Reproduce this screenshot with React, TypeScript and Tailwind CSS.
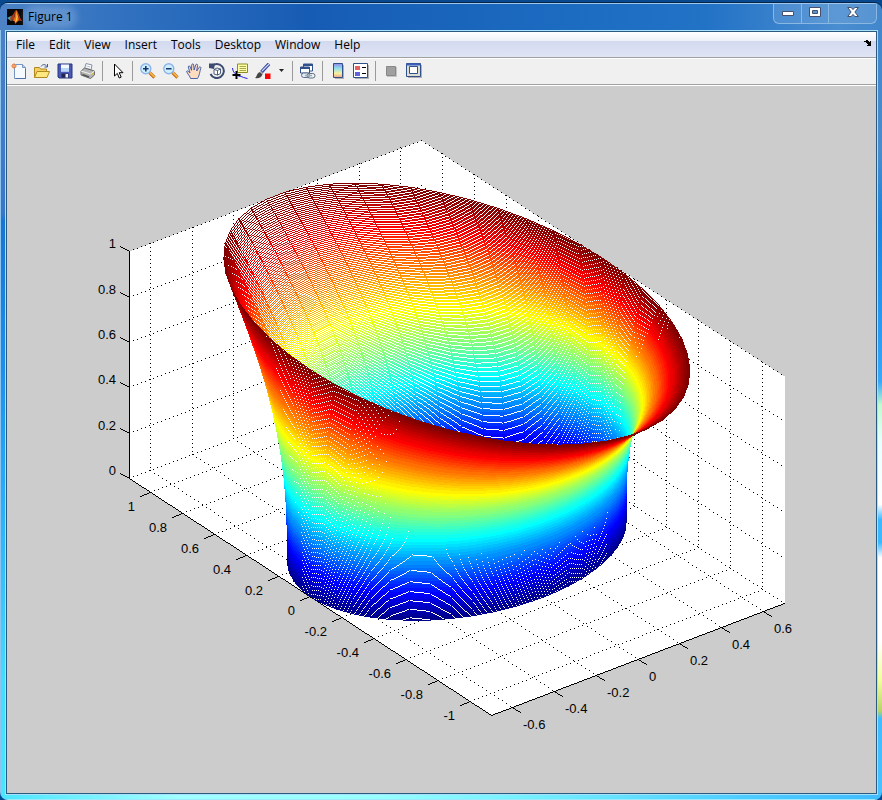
import type { ReactNode } from "react";

/* ---------- plot geometry ---------- */

const LEFT = 7;
const TOP = 86;
const W = 869;
const H = 707;

const WHITE = 1;
const BLACK = 2;
const JET = 3;

const X_MAX = 0.7;
const Y_MAX = 1.1325;

type Point = [number, number];

// az = -37.5, el = 30, equal axes
const projectExact = (x: number, y: number, z: number): Point => [
  456.3 + 208.6 * x - 160 * y,
  540.6 - 79.8 * x - 104.4 * y - 227 * z,
];

const project = (x: number, y: number, z: number): Point => {
  const [px, py] = projectExact(x, y, z);
  return [Math.round(px), Math.round(py)];
};

const pixels = new Uint8Array(W * H);

const plot = (x: number, y: number, color: number) => {
  const px = x - LEFT;
  const py = y - TOP;
  if (px >= 0 && py >= 0 && px < W && py < H) pixels[py * W + px] = color;
};

// steps along the longer axis, one pixel per step
const line = (a: Point, b: Point, color: number, every = 1) => {
  const major = Math.abs(b[0] - a[0]) >= Math.abs(b[1] - a[1]) ? 0 : 1;
  const minor = 1 - major;
  const start = Math.round(a[major]);
  const end = Math.round(b[major]);
  const dir = start <= end ? 1 : -1;
  const span = b[major] - a[major];
  const slope = span === 0 ? 0 : (b[minor] - a[minor]) / span;
  for (let n = 0; n <= Math.abs(end - start); n++) {
    if (n % every !== 0) continue;
    const m = start + n * dir;
    const v = Math.round(a[minor] + (m - a[major]) * slope);
    if (major === 0) plot(m, v, color);
    else plot(v, m, color);
  }
};

const fill = (points: Point[], color: number) => {
  const ys = points.map((p) => p[1]);
  for (let y = Math.ceil(Math.min(...ys)); y <= Math.max(...ys); y++) {
    const xs: number[] = [];
    points.forEach((p, i) => {
      const q = points[(i + 1) % points.length];
      if (p[1] <= y !== q[1] <= y) {
        xs.push(p[0] + ((y - p[1]) * (q[0] - p[0])) / (q[1] - p[1]));
      }
    });
    xs.sort((a, b) => a - b);
    for (let i = 0; i + 1 < xs.length; i += 2) {
      for (let x = Math.ceil(xs[i]); x <= Math.floor(xs[i + 1]); x++) plot(x, y, color);
    }
  }
};

const X_TICKS = [-0.6, -0.4, -0.2, 0, 0.2, 0.4, 0.6];
const Y_TICKS = [1, 0.8, 0.6, 0.4, 0.2, 0, -0.2, -0.4, -0.6, -0.8, -1];
const Z_TICKS = [0, 0.2, 0.4, 0.6, 0.8, 1];

const drawAxes = () => {
  fill(
    [
      project(-X_MAX, Y_MAX, 0),
      project(-X_MAX, Y_MAX, 1),
      project(X_MAX, Y_MAX, 1),
      project(X_MAX, -Y_MAX, 1),
      project(X_MAX, -Y_MAX, 0),
      project(-X_MAX, -Y_MAX, 0),
    ],
    WHITE
  );

  X_TICKS.forEach((x) => {
    line(project(x, Y_MAX, 1), project(x, Y_MAX, 0), BLACK, 4);
    line(project(x, Y_MAX, 0), project(x, -Y_MAX, 0), BLACK, 4);
  });
  Y_TICKS.forEach((y) => {
    line(project(X_MAX, y, 1), project(X_MAX, y, 0), BLACK, 4);
    line(project(-X_MAX, y, 0), project(X_MAX, y, 0), BLACK, 4);
  });
  Z_TICKS.forEach((z) => {
    line(project(-X_MAX, Y_MAX, z), project(X_MAX, Y_MAX, z), BLACK, 4);
    line(project(X_MAX, Y_MAX, z), project(X_MAX, -Y_MAX, z), BLACK, 4);
  });

  line(project(-X_MAX, Y_MAX, 1), project(-X_MAX, Y_MAX, 0), BLACK);
  line(project(-X_MAX, Y_MAX, 0), project(-X_MAX, -Y_MAX, 0), BLACK);
  line(project(-X_MAX, -Y_MAX, 0), project(X_MAX, -Y_MAX, 0), BLACK);

  X_TICKS.forEach((x) => {
    const p = project(x, -Y_MAX, 0);
    line(p, [p[0] + 8, p[1] + 5], BLACK);
  });
  Y_TICKS.forEach((y) => {
    const p = project(-X_MAX, y, 0);
    line(p, [p[0] - 10, p[1] + 4], BLACK);
  });
  Z_TICKS.forEach((z) => {
    const p = project(-X_MAX, Y_MAX, z);
    line(p, [p[0] - 9, p[1] - 5], BLACK);
  });
};

const ROWS = 200;
const COLS = 50;

// elliptic tube whose y radius grows with height
const surface = (i: number, j: number) => {
  const z = i / ROWS;
  const t = (2 * Math.PI * j) / COLS;
  const x = X_MAX * Math.cos(t);
  const y = Math.sqrt(0.29 + 0.998 * z ** 3) * Math.sin(t);
  return { at: projectExact(x, y, z), depth: -0.527 * x - 0.687 * y + 0.5 * z };
};

const drawMesh = () => {
  const faces: { points: Point[]; depth: number; color: number }[] = [];
  for (let i = 0; i < ROWS; i++) {
    for (let j = 0; j < COLS; j++) {
      const corners = [surface(i, j), surface(i, j + 1), surface(i + 1, j + 1), surface(i + 1, j)];
      faces.push({
        points: corners.map((c) => c.at),
        depth: corners.reduce((sum, c) => sum + c.depth, 0),
        color: JET + Math.min(63, Math.floor((i / ROWS) * 64)),
      });
    }
  }
  faces.sort((a, b) => a.depth - b.depth);
  faces.forEach(({ points, color }) => {
    fill(points, WHITE);
    points.forEach((p, k) => line(p, points[(k + 1) % 4], color));
  });
};

const clamp = (v: number) => Math.round(255 * Math.max(0, Math.min(1, v)));

const colorOf = (index: number) => {
  if (index === WHITE) return "#ffffff";
  if (index === BLACK) return "#000000";
  const v = (index - JET + 1) / 64;
  const r = clamp(1.5 - Math.abs(4 * v - 3));
  const g = clamp(1.5 - Math.abs(4 * v - 2));
  const b = clamp(1.5 - Math.abs(4 * v - 1));
  return `rgb(${r},${g},${b})`;
};

// one path per colour, made of horizontal runs
const buildRuns = () => {
  drawAxes();
  drawMesh();
  const runs = new Map<number, string[]>();
  for (let y = 0; y < H; y++) {
    let x = 0;
    while (x < W) {
      const color = pixels[y * W + x];
      const start = x;
      while (x < W && pixels[y * W + x] === color) x++;
      if (color) {
        if (!runs.has(color)) runs.set(color, []);
        runs.get(color)!.push(`M${start + LEFT} ${y + TOP}h${x - start}v1h${start - x}z`);
      }
    }
  }
  return [...runs].map(([color, parts]) => ({ color: colorOf(color), d: parts.join("") }));
};

const RUNS = buildRuns();

const Figure = () => (
  <svg
    viewBox={`${LEFT} ${TOP} ${W} ${H}`}
    className="block h-full w-full font-['Liberation_Sans',Arial,sans-serif] text-[13px]"
    role="img"
    aria-label="Mesh plot"
  >
    <g shapeRendering="crispEdges">
      {RUNS.map((run) => (
        <path key={run.color} d={run.d} fill={run.color} />
      ))}
    </g>
    {Z_TICKS.map((z) => {
      const [x, y] = project(-X_MAX, Y_MAX, z);
      return (
        <text key={z} x={x - 13} y={y - 3} textAnchor="end">
          {z}
        </text>
      );
    })}
    {Y_TICKS.map((v) => {
      const [x, y] = project(-X_MAX, v, 0);
      return (
        <text key={v} x={x - 15} y={y + 19} textAnchor="end">
          {v}
        </text>
      );
    })}
    {X_TICKS.map((v) => {
      const [x, y] = project(v, -Y_MAX, 0);
      return (
        <text key={v} x={x + 11} y={y + 22}>
          {v}
        </text>
      );
    })}
  </svg>
);

/* ---------- window chrome ---------- */

const MENUS = ["File", "Edit", "View", "Insert", "Tools", "Desktop", "Window", "Help"];

const Icon = ({ children }: { children: ReactNode }) => (
  <svg viewBox="0 0 16 16" className="h-4 w-4" aria-hidden="true">
    {children}
  </svg>
);

const Tool = ({ label, children }: { label: string; children: ReactNode }) => (
  <button type="button" aria-label={label} className="flex h-[23px] w-[23px] items-center justify-center">
    <Icon>{children}</Icon>
  </button>
);

const Separator = () => <div className="mx-[3px] h-5 w-px bg-[#9a9a9a]" />;

const Magnifier = ({ plus }: { plus?: boolean }) => (
  <>
    <path d="M9.5 9.5l5 5" stroke="#b86a10" strokeWidth="3.2" />
    <path d="M9.5 9l5 5" stroke="#f7b04a" strokeWidth="1.8" />
    <circle cx="5.8" cy="5.8" r="5" fill="#cdefff" stroke="#8db4e8" strokeWidth="1.4" />
    <path d={plus ? "M3 5.8h5.6M5.8 3v5.6" : "M3 5.8h5.6"} stroke="#17386e" strokeWidth="1.6" />
  </>
);

const Logo = () => (
  <svg viewBox="0 0 16 16" className="h-4 w-4" aria-hidden="true">
    <rect width="16" height="16" fill="#080808" />
    <path d="M0 9l4-2 3 2-3 3z" fill="#3fa6b5" />
    <path d="M4 7c2 0 3-4 5-6l-2 8-3 3-1-2z" fill="#a63a1c" />
    <path d="M9 1c2 1 3 7 6 11-2-1-3-1-4 0l-3 3c0-3-1-4-3-3 3-2 3-8 4-11z" fill="#e8641c" />
    <path d="M9 3c1 3 0 7-1 10l2-1c1-3 1-6-1-9z" fill="#f9c23c" />
    <path d="M10 3c2 4 3 7 5 9l-3-1z" fill="#9c2412" />
  </svg>
);

const Toolbar = () => (
  <div className="flex h-[26px] items-center border-t border-white bg-[#f0f0f0] pb-[2px]">
    <Tool label="New Figure">
      <path d="M3.5 1.5h8l3 3v11h-11z" fill="#f4faff" stroke="#7795c2" />
      <path d="M11.5 1.5v3h3" fill="#b9d2f0" stroke="#7795c2" />
      <path d="M4.5 15.5h10V6" stroke="#4f70a8" fill="none" />
      <path d="M3 0v6M0 3h6M1 1l4 4M5 1L1 5" stroke="#ee8a50" strokeWidth=".9" />
      <circle cx="3" cy="3" r="1.3" fill="#fff0a0" stroke="#e05820" strokeWidth=".8" />
    </Tool>
    <Tool label="Open File">
      <path d="M.5 14.5v-10h5l1 1.500h6v3" fill="#f5d060" stroke="#b08a20" />
      <path d="M.5 14.500l2.500-6h12.500l-2.500 6z" fill="#ffe780" stroke="#b08a20" />
      <path d="M7 3.500c1.500-2.500 4.500-2.500 6 0M13.500 1v3h-3" fill="none" stroke="#405c90" />
    </Tool>
    <Tool label="Save Figure">
      <path d="M1 1h14v14H2l-1-1z" fill="#4a58b8" stroke="#28347c" />
      <path d="M4 1.500h8v7H4z" fill="#f4f8ff" />
      <path d="M4 5h8v3.500H4z" fill="#b9d8f8" />
      <path d="M4.500 10.500h7v4h-7z" fill="#20264c" />
      <path d="M8.500 11h2.500v3.500H8.500z" fill="#f0f0f0" />
    </Tool>
    <Tool label="Print Figure">
      <path d="M4.500 6l1.500-5.500 6 1.500-1 5z" fill="#fff" stroke="#8590a4" />
      <path d="M6.500 3l4 1M6 5l4 1" stroke="#9cb0d0" strokeWidth=".8" />
      <path d="M1 8l3.500-3 10 3v4l-4 3.500L1 12z" fill="#b4b4b4" stroke="#6a6a6a" />
      <path d="M1 8l9.500 3 4-3" fill="none" stroke="#f2f2f2" />
      <path d="M2.500 11.500l6.500 2.500" stroke="#555" strokeWidth="1.400" />
      <path d="M11.500 11.500l2-1.500" stroke="#e0bc40" strokeWidth="1.300" />
    </Tool>
    <Separator />
    <Tool label="Edit Plot">
      <path d="M4.500 1v12l2.800-2.600L9.200 15l2-.9-2-4.400H13z" fill="#fff" stroke="#000" />
    </Tool>
    <Separator />
    <Tool label="Zoom In">
      <Magnifier plus />
    </Tool>
    <Tool label="Zoom Out">
      <Magnifier />
    </Tool>
    <Tool label="Pan">
      <path
        d="M4.500 15.500c-.5-2-1.500-3-2.500-4.500L.5 8.500c.5-1 1.800-.8 2.800.8L4 10 2.300 4c0-1.400 1.500-1.500 2 0l1.200 3.300L5.700 2c.2-1.500 1.800-1.500 2 0l.4 5L9.700 2c.5-1.400 2-1 1.900.4L10.700 8l2.400-3.700c.9-1 2.200-.2 1.700 1-1 2.700-1.300 7.400-3.300 10.200z"
        fill="#ffdcc0"
        stroke="#3a55a0"
        strokeWidth=".9"
      />
    </Tool>
    <Tool label="Rotate 3D">
      <path d="M2.500 3.500a7 7 0 1 1-1 7.500" fill="none" stroke="#3c4c70" strokeWidth="2" />
      <path d="M0 .5h6L5 6 0 5z" fill="#3c4c70" />
      <path d="M5 6.500l3-1.500 3.500 1v4.500L8.500 12 5 11zM5 6.500l3.500 1 3-1.500M8.500 7.500V12" fill="#fff" stroke="#3c4c70" strokeWidth=".9" />
    </Tool>
    <Tool label="Data Cursor">
      <path d="M5.500 1h10v8.500h-10z" fill="#ffffa8" stroke="#8c8c20" />
      <path d="M7.500 3.500H14M7.500 5.500H14M7.500 7.500H14" stroke="#a8a850" />
      <path d="M.5 5c.3 3 1.500 5 4 7 3 2 5 1 7 2.500l4 1" fill="none" stroke="#2020e0" />
      <path d="M4.500 8v8M.5 12h8" stroke="#000" strokeWidth="2" />
    </Tool>
    <Tool label="Brush">
      <path d="M6.500 9L14 .8" stroke="#38489c" strokeWidth="3.400" />
      <path d="M7 8L14 1" stroke="#c8d2ff" strokeWidth="1.300" />
      <path d="M0 15c2-1 1.500-5 5-6l2.500 2C7 14.500 3 16 0 15z" fill="#454545" />
      <path d="M5.300 8.500l2.500 2.500" stroke="#a8a8a8" strokeWidth="1.400" />
      <path d="M10 10.500h5.500V16H10z" fill="#f00" />
    </Tool>
    <button type="button" aria-label="Brush options" className="flex h-[23px] w-[15px] items-center justify-center">
      <svg viewBox="0 0 5 3" className="h-[3px] w-[5px]" aria-hidden="true">
        <path d="M0 0h5L2.500 3z" fill="#222" />
      </svg>
    </button>
    <Separator />
    <Tool label="Link Plot">
      <path d="M3.500 1h9v7h-9z" fill="#fff" stroke="#30508c" />
      <path d="M3.500 2h9" stroke="#30508c" strokeWidth="2" />
      <path d="M.5 4h9v6h-9z" fill="#fff" stroke="#30508c" />
      <path d="M.5 5h9" stroke="#30508c" strokeWidth="2" />
      <rect x="1.500" y="10" width="8" height="4.500" rx="2.200" fill="#e4ecf4" stroke="#5c7088" />
      <rect x="7" y="10.500" width="8" height="4.500" rx="2.200" fill="none" stroke="#5c7088" />
      <path d="M5 12.500h7" stroke="#9aacbc" strokeWidth="1.400" />
    </Tool>
    <Separator />
    <Tool label="Insert Colorbar">
      <defs>
        <linearGradient id="bar" x2="0" y2="1">
          <stop offset="0" stopColor="#8f8ae8" />
          <stop offset=".35" stopColor="#8fe0ee" />
          <stop offset=".7" stopColor="#f8f0a0" />
          <stop offset="1" stopColor="#f0a088" />
        </linearGradient>
      </defs>
      <path d="M5 2h9v14H5z" fill="#b0b0b0" />
      <path d="M3.500.500h9v14h-9z" fill="url(#bar)" stroke="#30508c" />
    </Tool>
    <Tool label="Insert Legend">
      <path d="M2 2h14v14H2z" fill="#b0b0b0" />
      <path d="M.5.500h14v14H.5z" fill="#fff" stroke="#30508c" />
      <path d="M2 3h5v4H2z" fill="#e86060" />
      <path d="M2 9h5v4H2z" fill="#6060e0" />
      <path d="M9 4.500h4M9 10.500h4" stroke="#000" />
    </Tool>
    <Separator />
    <Tool label="Hide Plot Tools">
      <path d="M4 4h10v10H4z" fill="#c4c4c4" />
      <path d="M3.500 3.500h9v9h-9z" fill="#a0a0a0" stroke="#888" />
    </Tool>
    <Tool label="Show Plot Tools and Dock Figure">
      <path d="M2 2h14v13H2z" fill="#b0b0b0" />
      <path d="M.5.500h14v13H.5z" fill="#dcdcd0" stroke="#30508c" />
      <path d="M.5 1.500h14" stroke="#3c5cc0" strokeWidth="2" />
      <path d="M3.500 3.500h8v7h-8z" fill="#fff" stroke="#30508c" />
    </Tool>
  </div>
);

const TitleBar = () => (
  <div className="flex h-[27px] items-start justify-between border-t border-[#9cc8f0] bg-[linear-gradient(90deg,#4d83c6_0%,#3272c0_13%,#175cb4_35%,#1c6cc2_65%,#2272c6_80%,#4a8dd0_95%,#4287cc_100%)] pl-[7px] pr-[5px]">
    <div className="flex items-center pt-[5px]">
      <Logo />
      <h1 className="ml-[5px] rounded-lg bg-[#a8c8ec]/30 text-xs leading-4 text-black shadow-[0_0_6px_4px_rgba(168,200,236,0.3)]">
        Figure 1
      </h1>
    </div>
    <div className="flex h-5 overflow-hidden rounded-b-md border border-t-0 border-[#8ab8e4] bg-white/10">
      <button type="button" aria-label="Minimize" className="flex w-7 items-center justify-center border-r border-[#8ab8e4]">
        <svg viewBox="0 0 12 5" className="h-[5px] w-3" aria-hidden="true">
          <path d="M.5.500h11v4H.5z" fill="#fff" stroke="#46506a" />
        </svg>
      </button>
      <button type="button" aria-label="Maximize" className="flex w-[27px] justify-center border-r border-[#8ab8e4] pt-[3px]">
        <svg viewBox="0 0 12 10" className="h-[10px] w-3" aria-hidden="true">
          <path d="M.5.500h11v9H.5zM3.500 3.500h5v3h-5z" fill="#fff" fillRule="evenodd" stroke="#46506a" />
        </svg>
      </button>
      <button type="button" aria-label="Close" className="flex w-[47px] justify-center pt-[3px]">
        <svg viewBox="0 0 12 10" className="h-[10px] w-3" aria-hidden="true">
          <path d="M.7.500h3.500L6 2.600 7.800.5h3.500L7.900 5l3.400 4.500H7.800L6 7.400 4.200 9.500H.7L4.100 5z" fill="#fff" stroke="#46506a" />
        </svg>
      </button>
    </div>
  </div>
);

const App = () => (
  <div className="flex min-h-screen flex-col bg-[#07488f] pt-[2px] font-['Open_Sans','Noto_Sans',sans-serif]">
    <div className="flex flex-1 flex-col overflow-hidden rounded-lg border-t border-[#0a2445]">
      <TitleBar />
      <div className="flex flex-1">
        <div className="w-[5px] border-l border-[#8cc4ee] bg-[linear-gradient(180deg,#4a80c8_0%,#3a76c8_24%,#1674d4_25%,#1c90ee_45%,#2cb4fc_65%,#44dcff_85%,#4be5ff_100%)]" />
        <div className="flex min-w-0 flex-1 flex-col border border-[#a8e0fa]">
          <div className="flex flex-1 flex-col border border-[#2a5a80] bg-[#cccccc]">
            <nav className="flex h-[25px] items-center justify-between bg-[linear-gradient(180deg,#ffffff_0%,#eef1f9_35%,#d4daee_38%,#dfe5f5_100%)] pb-[3px] pl-[2px]">
              <ul className="flex">
                {MENUS.map((menu) => (
                  <li key={menu}>
                    <button type="button" className="px-[7px] text-xs leading-4 text-black">
                      {menu}
                    </button>
                  </li>
                ))}
              </ul>
              <button type="button" aria-label="Dock Figure" className="mr-1">
                <svg viewBox="0 0 8 6" className="h-[6px] w-2" shapeRendering="crispEdges" aria-hidden="true">
                  <path d="M0 1h2v-1h2v1h1v1h1V1h1v5H3V5h1V4H3V3H2V2H0z" fill="#000" />
                </svg>
              </button>
            </nav>
            <div className="border-y border-[#a0a0a0]">
              <Toolbar />
            </div>
            <div className="border-t border-white" />
            <main className="min-h-0 flex-1">
              <Figure />
            </main>
          </div>
        </div>
        <div className="w-1 bg-[linear-gradient(180deg,#4287cc_0%,#4a8ccc_16%,#1c84dc_25%,#2c9cf2_40%,#3aa8f8_46%,#c0fad0_49%,#e8ffff_54%,#ffffff_62%,#3cb8ff_64%,#3cb8ff_67%,#ffffff_69%,#ffffff_80%,#f0ff9c_85%,#b8d468_89%,#40bcff_90%,#48c0ff_100%)]" />
      </div>
      <div className="h-[5px] border-b border-[#9ce8ff] bg-[linear-gradient(90deg,#4be5ff_0%,#a0ffff_20%,#98ffff_42%,#74f0ff_60%,#4cccff_85%,#40bcff_100%)]" />
    </div>
  </div>
);

export default App;
